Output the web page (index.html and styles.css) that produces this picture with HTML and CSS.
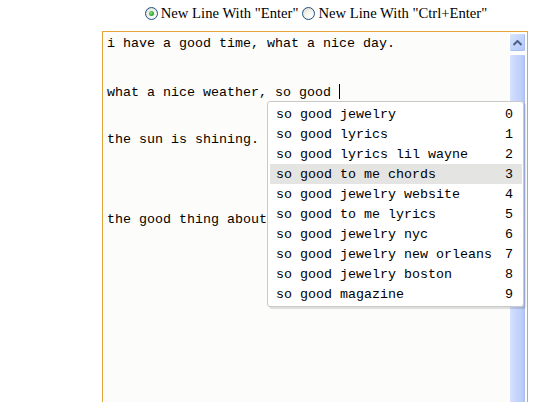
FILE: index.html
```html
<!DOCTYPE html>
<html>
<head>
<meta charset="utf-8">
<link rel="stylesheet" href="styles.css">
</head>
<body>
<div class="wrap">
  <div class="modes">
    <label class="mode"><span class="radio on"></span>New Line With "Enter"</label>
    <label class="mode"><span class="radio"></span>New Line With "Ctrl+Enter"</label>
  </div>
  <div class="editor">
    <div class="content">
      <div class="line"><span>i have a good time, what a nice day.</span></div>
      <div class="line"></div>
      <div class="line"></div>
      <div class="line"><span>what a nice weather, so good </span><span class="caret"></span></div>
      <div class="line"></div>
      <div class="line"></div>
      <div class="line"><span>the sun is shining.</span></div>
      <div class="line"></div>
      <div class="line"></div>
      <div class="line"></div>
      <div class="line"></div>
      <div class="line"><span>the good thing about</span></div>
    </div>
    <div class="scrollbar">
      <div class="sb-btn">
        <svg width="9" height="6" viewBox="0 0 9 6"><path d="M0.5 5 L4.5 1 L8.5 5" fill="none" stroke="#4d6185" stroke-width="2"/></svg>
      </div>
      <div class="sb-thumb"></div>
    </div>
    <ul class="suggest">
      <li><span>so good jewelry</span><span>0</span></li>
      <li><span>so good lyrics</span><span>1</span></li>
      <li><span>so good lyrics lil wayne</span><span>2</span></li>
      <li class="active"><span>so good to me chords</span><span>3</span></li>
      <li><span>so good jewelry website</span><span>4</span></li>
      <li><span>so good to me lyrics</span><span>5</span></li>
      <li><span>so good jewelry nyc</span><span>6</span></li>
      <li><span>so good jewelry new orleans</span><span>7</span></li>
      <li><span>so good jewelry boston</span><span>8</span></li>
      <li><span>so good magazine</span><span>9</span></li>
    </ul>
  </div>
</div>
</body>
</html>
```
FILE: styles.css
```css
html, body {
  margin: 0;
  padding: 0;
  background: #ffffff;
  overflow: hidden;
}
.wrap {
  margin-left: 102px;
  width: 426px;
}
.modes {
  display: flex;
  justify-content: center;
  align-items: center;
  gap: 4px;
  height: 26px;
  padding-top: 1px;
  padding-left: 2px;
  box-sizing: border-box;
  font-family: "Liberation Serif", serif;
  font-size: 14.67px;
  color: #000;
}
.mode {
  display: flex;
  align-items: center;
  gap: 3px;
}
.radio {
  width: 11px;
  height: 11px;
  border: 1px solid #1c5180;
  border-radius: 50%;
  background: radial-gradient(circle at 65% 70%, #ffffff 0%, #f2f2ec 45%, #d6d5cc 100%);
  position: relative;
}
.radio.on::after {
  content: "";
  position: absolute;
  left: 3px;
  top: 3px;
  width: 5px;
  height: 5px;
  border-radius: 50%;
  background: radial-gradient(circle at 40% 40%, #8be08b 0%, #2fae2f 55%, #1e8c1e 100%);
}
.editor {
  position: relative;
  margin-top: 5px;
  height: 380px;
  border: 1px solid #e5a53a;
  background: #fcfdfa;
  display: flex;
}
.content {
  flex: 1;
  font-family: "Liberation Mono", monospace;
  font-size: 13.33px;
  line-height: 16px;
  padding: 4px 4px 0;
  color: #000;
  overflow: hidden;
}
.line {
  height: 16px;
  white-space: pre;
}
.caret {
  display: inline-block;
  width: 1px;
  height: 15px;
  background: #000;
  vertical-align: -3px;
}
.scrollbar {
  width: 17px;
  padding: 1px 1px 0 0;
  display: flex;
  flex-direction: column;
  gap: 2px;
}
.sb-btn {
  height: 17px;
  border: 1px solid #ffffff;
  border-radius: 2px;
  background: linear-gradient(135deg, #dbe6fe 0%, #c3d4fd 50%, #b2c6f7 100%);
  box-shadow: inset -1px -1px 0 #a9bef0;
  display: flex;
  align-items: center;
  justify-content: center;
}
.sb-thumb {
  flex: 1;
  border: 1px solid #ffffff;
  border-radius: 2px;
  background: linear-gradient(90deg, #d5e1fe 0%, #c7d6fd 40%, #bccefa 80%, #a9bdf2 100%);
}
.suggest {
  position: absolute;
  left: 164px;
  top: 69px;
  width: 252px;
  margin: 0;
  padding: 2px 1px 2px 2px;
  list-style: none;
  background: #ffffff;
  border: 1px solid #c9c9c9;
  border-radius: 3px;
  box-shadow: 2px 2px 1px rgba(0, 0, 0, 0.12);
  font-family: "Liberation Mono", monospace;
  font-size: 13.33px;
  color: #000;
}
.suggest li {
  display: flex;
  justify-content: space-between;
  height: 20px;
  line-height: 18px;
  padding: 2px 9px 0 6px;
  box-sizing: border-box;
}
.suggest li.active {
  background: #e4e4e2;
}
```
